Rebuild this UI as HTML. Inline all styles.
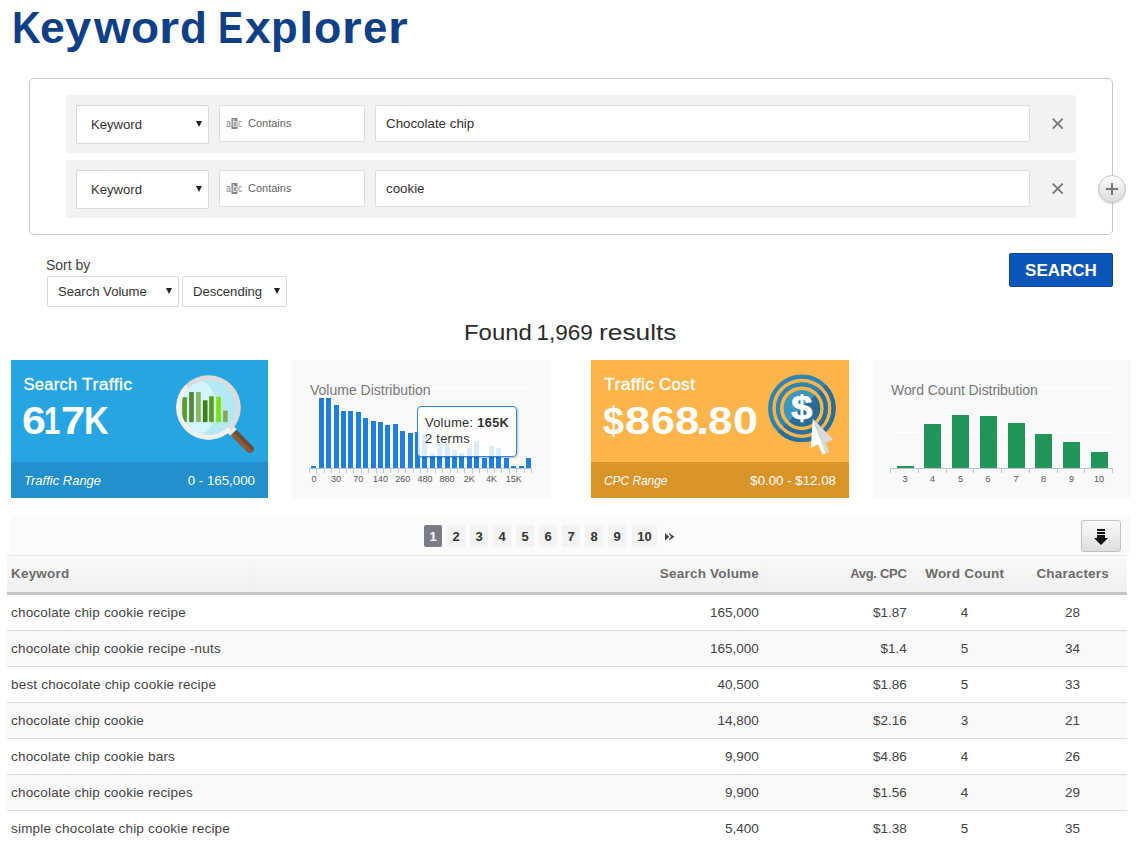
<!DOCTYPE html>
<html>
<head>
<meta charset="utf-8">
<title>Keyword Explorer</title>
<style>
*{box-sizing:border-box;margin:0;padding:0}
html,body{width:1145px;height:843px;overflow:hidden;background:#fff}
body{font-family:"Liberation Sans",sans-serif;color:#444;position:relative}
.a{position:absolute;white-space:nowrap}
#title{left:0;top:0;font-size:44.3px;line-height:44.3px;font-weight:bold;color:#0f3f87}
.g{transform-origin:0 0;display:block}
#fbox{left:29px;top:78px;width:1084px;height:157px;border:1px solid #c8c8c8;border-radius:5px;background:#fff}
.frow{left:66px;width:1010px;height:58px;background:#f2f2f2;border-radius:3px}
.sel{background:#fff;border:1px solid #d8d8d8;border-radius:2px;font-size:13.1px;color:#333}
.sel .tx{position:absolute;top:0;line-height:100%}
.arr{position:absolute;width:0;height:0;border-left:3.5px solid transparent;border-right:3.5px solid transparent;border-top:6px solid #222}
.cont{background:#fff;border:1px solid #ddd;border-radius:2px}
.inp{background:#fff;border:1px solid #ddd;border-radius:2px;font-size:13.33px;color:#333}
.x{font-size:14px;color:#555}
#plus{left:1098px;top:175px;width:28px;height:28px;border-radius:50%;border:1px solid #c4c4c4;background:linear-gradient(#fcfcfc,#dcdcdc);box-shadow:0 1px 1px rgba(0,0,0,.15)}
#sortby{left:46px;top:256px;font-size:14px;line-height:18px;color:#444}
#search{left:1009px;top:253px;width:104px;height:34px;background:#0d56b9;border:1px solid #0a469a;border-radius:2px;color:#fff;font-weight:bold;font-size:17px;line-height:34px;text-align:center}
.fw{top:319px;font-size:22.5px;line-height:28px;color:#2b2b2b;transform-origin:0 0}
#found{left:0;width:1142px;top:319px;text-align:center;font-size:22.5px;line-height:28px;color:#2b2b2b;letter-spacing:.78px}
.card{top:360px;height:138px;width:258px}
.card .ft{position:absolute;left:0;right:0;top:102px;bottom:0}
.ct{transform-origin:0 0;font-size:16.5px;line-height:20px;color:#fff;letter-spacing:.3px;-webkit-text-stroke:.3px #fff}
.cv{font-size:38.2px;line-height:38.2px;color:#fff;font-weight:bold}
.cf{font-size:13.3px;line-height:16px;color:#fff}
.cf.i{font-style:italic;font-size:13px}
.gt{font-size:14px;line-height:16px;color:#777}
.gl{font-size:9px;line-height:10px;color:#555;text-align:center;width:30px}
#pbar{left:11px;top:516px;width:1120px;height:39px;background:#fbfbfb}
.pg{top:525px;height:22px;width:18px;border-radius:2px;background:#f3f3f3;color:#333;font-weight:bold;font-size:13px;line-height:24px;text-align:center}
.pg.on{background:#7c7c86;color:#fff}
#thead{left:7px;top:555px;width:1120px;height:40px;background:linear-gradient(#f9f9f9,#f0f0f0);border-top:1px solid #e9e9e9;border-bottom:3px solid #c6c6c6}
.th{top:566px;font-size:13.5px;line-height:16px;font-weight:bold;color:#6b6b6b;letter-spacing:.2px}
.tr{left:7px;width:1120px;height:36px;border-bottom:1px solid #ddd}
.tr.alt{background:#f9f9f9}
.td{font-size:13.5px;line-height:16px;color:#444}
.td.k{letter-spacing:.19px}
.r{text-align:right}
.c{text-align:center}
</style>
</head>
<body>
<div class="a" id="title"><span class="a g" style="left:11.55px;top:6.10px;transform:scaleX(0.895)">K</span><span class="a g" style="left:39.95px;top:6.10px;transform:scaleX(1.010)">e</span><span class="a g" style="left:64.63px;top:6.10px;transform:scaleX(1.064)">y</span><span class="a g" style="left:93.94px;top:6.10px;transform:scaleX(1.058)">w</span><span class="a g" style="left:131.30px;top:6.10px;transform:scaleX(1.038)">o</span><span class="a g" style="left:159.00px;top:6.10px;transform:scaleX(1.165)">r</span><span class="a g" style="left:179.59px;top:6.10px;transform:scaleX(0.994)">d</span><span class="a g" style="left:218.08px;top:6.10px;transform:scaleX(0.849)">E</span><span class="a g" style="left:244.68px;top:6.10px;transform:scaleX(1.045)">x</span><span class="a g" style="left:271.42px;top:6.10px;transform:scaleX(0.986)">p</span><span class="a g" style="left:298.94px;top:6.10px;transform:scaleX(1.185)">l</span><span class="a g" style="left:314.25px;top:6.10px;transform:scaleX(1.009)">o</span><span class="a g" style="left:341.96px;top:6.10px;transform:scaleX(1.143)">r</span><span class="a g" style="left:362.89px;top:6.10px;transform:scaleX(0.986)">e</span><span class="a g" style="left:387.86px;top:6.10px;transform:scaleX(1.143)">r</span></div>

<div class="a" id="fbox"></div>
<div class="a frow" style="top:95px"></div>
<div class="a frow" style="top:160px"></div>


<div class="a sel" style="left:76px;top:105px;width:133px;height:39px"><span class="tx" style="left:14px;top:12px">Keyword</span><span class="arr" style="left:119px;top:15px"></span></div>
<div class="a cont" style="left:219px;top:105px;width:146px;height:37px">
<svg class="a" style="left:5.5px;top:12px" width="18" height="12" viewBox="0 0 18 12"><rect x="5.500" y="0" width="6" height="11" fill="#858585"/><text transform="translate(0.2 9) scale(.8 1)" font-family="Liberation Sans, sans-serif" font-size="10.500" fill="#7a7a7a">a</text><text transform="translate(6.5 9) scale(.8 1)" font-family="Liberation Sans, sans-serif" font-size="10.500" fill="#fff">b</text><text transform="translate(12.3 9) scale(.72 1)" font-family="Liberation Sans, sans-serif" font-size="10.500" fill="#7a7a7a">c</text></svg>
<span class="a" style="left:28px;top:10px;font-size:11px;line-height:14px;color:#666">Contains</span></div>
<div class="a inp" style="left:375px;top:105px;width:655px;height:37px"><span class="a" style="left:10px;top:10px;line-height:16px">Chocolate chip</span></div>
<svg class="a" style="left:1051.5px;top:117.8px" width="12" height="12" viewBox="0 0 12 12"><path d="M0.700 0.700L10.700 10.700M10.700 0.700L0.700 10.700" stroke="#777" stroke-width="1.9" fill="none"/></svg>

<div class="a sel" style="left:76px;top:170px;width:133px;height:39px"><span class="tx" style="left:14px;top:12px">Keyword</span><span class="arr" style="left:119px;top:15px"></span></div>
<div class="a cont" style="left:219px;top:170px;width:146px;height:37px">
<svg class="a" style="left:5.5px;top:12px" width="18" height="12" viewBox="0 0 18 12"><rect x="5.500" y="0" width="6" height="11" fill="#858585"/><text transform="translate(0.2 9) scale(.8 1)" font-family="Liberation Sans, sans-serif" font-size="10.500" fill="#7a7a7a">a</text><text transform="translate(6.5 9) scale(.8 1)" font-family="Liberation Sans, sans-serif" font-size="10.500" fill="#fff">b</text><text transform="translate(12.3 9) scale(.72 1)" font-family="Liberation Sans, sans-serif" font-size="10.500" fill="#7a7a7a">c</text></svg>
<span class="a" style="left:28px;top:10px;font-size:11px;line-height:14px;color:#666">Contains</span></div>
<div class="a inp" style="left:375px;top:170px;width:655px;height:37px"><span class="a" style="left:10px;top:10px;line-height:16px">cookie</span></div>
<svg class="a" style="left:1051.5px;top:182.8px" width="12" height="12" viewBox="0 0 12 12"><path d="M0.700 0.700L10.700 10.700M10.700 0.700L0.700 10.700" stroke="#777" stroke-width="1.9" fill="none"/></svg>

<div class="a" id="plus"><svg class="a" style="left:7px;top:7px" width="12" height="12" viewBox="0 0 12 12"><path d="M6 0V12M0 6H12" stroke="#777" stroke-width="2" fill="none"/></svg></div>
<div class="a sel" style="left:47px;top:276px;width:132px;height:31px"><span class="tx" style="left:10px;top:8px">Search Volume</span><span class="arr" style="left:118px;top:11px"></span></div>
<div class="a sel" style="left:182px;top:276px;width:105px;height:31px"><span class="tx" style="left:10px;top:8px">Descending</span><span class="arr" style="left:91px;top:11px"></span></div>
<div class="a" id="sortby">Sort by</div>
<div class="a" id="search">SEARCH</div>
<div class="a fw" style="left:463.7px;transform:scaleX(1.063)">Found</div><div class="a fw" style="left:536.4px">1,969</div><div class="a fw" style="left:599.2px;transform:scaleX(1.17)">results</div>


<div class="a card" style="left:11px;width:257px;background:#27a5e3"><div class="ft" style="background:#2190cc"></div>
<div class="a ct" style="left:12.4px;top:14px;transform:scaleX(1.0)">Search</div><div class="a ct" style="left:70.6px;top:14px;transform:scaleX(1.072)">Traffic</div>
<div class="a cv" style="left:0;top:0"><span class="a g" style="left:10.83px;top:41.66px;transform:scaleX(1.121)">6</span><span class="a g" style="left:32.56px;top:41.66px;transform:scaleX(0.765)">1</span><span class="a g" style="left:49.83px;top:41.66px;transform:scaleX(1.138)">7</span><span class="a g" style="left:73.02px;top:41.66px;transform:scaleX(0.892)">K</span></div>
<div class="a cf i" style="left:13px;top:113px">Traffic Range</div>
<div class="a cf r" style="right:13px;top:113px">0 - 165,000</div>
<svg class="a" style="left:160px;top:10px" width="90" height="90" viewBox="0 0 90 90">
<defs><clipPath id="lens"><circle cx="37.5" cy="37.5" r="27.6"/></clipPath></defs>
<path d="M65.29 59.77 L81.76 76.25 A3.9 3.9 0 0 1 76.25 81.76 L59.77 65.29Z" fill="#6e4a35"/>
<path d="M62.53 62.53 L81.76 81.76 A3.9 3.9 0 0 1 76.25 81.76 L59.77 65.29Z" fill="#8b5a3d"/>
<path d="M61.26 54.75 L65.78 59.28 L59.28 65.78 L54.75 61.26Z" fill="#e9e9ec"/>
<circle cx="37.5" cy="37.5" r="32.3" fill="#dcdcdc"/>
<path d="M14.66 14.66 A32.3 32.3 0 0 0 60.34 60.34Z" fill="#f1f1f1"/>
<circle cx="37.5" cy="37.5" r="27.6" fill="#b4e9f3"/>
<g clip-path="url(#lens)">
<circle cx="15.6" cy="37.7" r="31" fill="#d2f5fa"/>
<rect x="11.2" y="27.2" width="4.7" height="24.9" fill="#5e9a2c"/>
<rect x="18.1" y="22" width="4.7" height="30.100" fill="#5a873a"/>
<rect x="25.1" y="22" width="4.7" height="30.100" fill="#8db366"/>
<rect x="31.9" y="30.300" width="4.6" height="21.800" fill="#3f8018"/>
<rect x="38.100" y="26.200" width="4.7" height="25.900" fill="#58a01b"/>
<rect x="45.200" y="26.800" width="4.7" height="25.300" fill="#7ee010"/>
<rect x="52.100" y="40.600" width="4.6" height="11.500" fill="#86a84c"/>
</g>
</svg>
</div>

<div class="a card" style="left:292px;background:#f9f9f9">
<svg class="a" style="left:0;top:0" width="258" height="138" viewBox="0 0 258 138">
<path d="M17.6 27.5H241" stroke="#fff" stroke-width="1"/>
<g fill="#1e7fe0"><rect x="19" y="106" width="5" height="2"/><rect x="27" y="38" width="5" height="70"/><rect x="34" y="38" width="5" height="70"/><rect x="42" y="45" width="5" height="63"/><rect x="49" y="51" width="5" height="57"/><rect x="56" y="51" width="5" height="57"/><rect x="64" y="52" width="5" height="56"/><rect x="71" y="58" width="5" height="50"/><rect x="79" y="61" width="5" height="47"/><rect x="86" y="62" width="5" height="46"/><rect x="93" y="65" width="5" height="43"/><rect x="101" y="64" width="5" height="44"/><rect x="108" y="71" width="5" height="37"/><rect x="116" y="73" width="5" height="35"/><rect x="123" y="72" width="5" height="36"/><rect x="130" y="74" width="5" height="34"/><rect x="138" y="93" width="5" height="15"/><rect x="145" y="83" width="5" height="25"/><rect x="153" y="83" width="5" height="25"/><rect x="160" y="90" width="5" height="18"/><rect x="167" y="93" width="5" height="15"/><rect x="175" y="88" width="5" height="20"/><rect x="182" y="81" width="5" height="27"/><rect x="190" y="98" width="5" height="10"/><rect x="197" y="86" width="5" height="22"/><rect x="204" y="88" width="5" height="20"/><rect x="212" y="98" width="5" height="10"/><rect x="219" y="106" width="5" height="2"/><rect x="227" y="106" width="5" height="2"/><rect x="234" y="98" width="5" height="10"/></g>
<path d="M17 108.500H240M17.5 108.5V113M24.5 108.5V113M32.5 108.5V113M39.5 108.5V113M47.5 108.5V113M54.5 108.5V113M61.5 108.5V113M69.5 108.5V113M76.5 108.5V113M84.5 108.5V113M91.5 108.5V113M98.5 108.5V113M106.5 108.5V113M113.5 108.5V113M121.5 108.5V113M128.5 108.5V113M135.5 108.5V113M143.5 108.5V113M150.5 108.5V113M158.5 108.5V113M165.5 108.5V113M172.5 108.5V113M180.5 108.5V113M187.5 108.5V113M195.5 108.5V113M202.5 108.5V113M209.5 108.5V113M217.5 108.5V113M224.5 108.5V113M232.5 108.5V113M239.5 108.5V113" stroke="#b8c6d8" stroke-width="1" fill="none"/>
</svg>
<div class="a gt" style="left:18px;top:22px">Volume Distribution</div>
<div class="a gl" style="left:6.9px;top:114px">0</div><div class="a gl" style="left:29.1px;top:114px">30</div><div class="a gl" style="left:51.3px;top:114px">70</div><div class="a gl" style="left:73.5px;top:114px">140</div><div class="a gl" style="left:95.7px;top:114px">260</div><div class="a gl" style="left:117.9px;top:114px">480</div><div class="a gl" style="left:140.1px;top:114px">880</div><div class="a gl" style="left:162.3px;top:114px">2K</div><div class="a gl" style="left:184.5px;top:114px">4K</div><div class="a gl" style="left:206.7px;top:114px">15K</div>
<div class="a" style="left:125px;top:46px;width:100px;height:51px;background:rgba(255,255,255,.85);border:1px solid #2c86dd;border-radius:4px;box-shadow:1px 1px 2px rgba(0,0,0,.25)">
<div class="a" style="left:6.5px;top:9px;font-size:12px;line-height:14px;color:#333;letter-spacing:.3px;transform-origin:0 0;transform:scaleX(1.065)">Volume: <b>165K</b></div>
<div class="a" style="left:6.5px;top:25px;font-size:12px;line-height:14px;color:#333;letter-spacing:.3px;transform-origin:0 0;transform:scaleX(1.065)">2 terms</div>
</div>
</div>

<div class="a card" style="left:591px;background:#fdb44b"><div class="ft" style="background:#d9942a"></div>
<div class="a ct" style="left:12.9px;top:14px;transform:scaleX(1.072)">Traffic</div><div class="a ct" style="left:68.1px;top:14px;transform:scaleX(1.03)">Cost</div>
<div class="a cv" style="left:0;top:0"><span class="a g" style="left:12.10px;top:41.66px;transform:scaleX(0.985)">$</span><span class="a g" style="left:34.47px;top:41.66px;transform:scaleX(1.183)">8</span><span class="a g" style="left:59.62px;top:41.66px;transform:scaleX(1.126)">6</span><span class="a g" style="left:83.51px;top:41.66px;transform:scaleX(1.145)">8</span><span class="a g" style="left:105.48px;top:41.66px;transform:scaleX(1.243)">.</span><span class="a g" style="left:116.91px;top:41.66px;transform:scaleX(1.145)">8</span><span class="a g" style="left:141.81px;top:41.66px;transform:scaleX(1.183)">0</span></div>
<div class="a cf i" style="left:13px;top:113px;transform-origin:0 0;transform:scaleX(.915)">CPC Range</div>
<div class="a cf r" style="right:13px;top:113px">$0.00 - $12.08</div>
<svg class="a" style="left:172px;top:10px" width="80" height="90" viewBox="0 0 80 90">
<defs><clipPath id="tlr"><path d="M80 -3 L80 90 L-13 90 Z"/></clipPath></defs>
<g fill="none" stroke="#2e84b2" stroke-width="4.200"><circle cx="38.9" cy="38.3" r="31.700"/><circle cx="38.9" cy="38.3" r="24"/></g>
<circle cx="38.9" cy="38.3" r="18.300" fill="#3f96b8"/>
<g clip-path="url(#tlr)">
<g fill="none" stroke="#2a6f9b" stroke-width="4.200"><circle cx="38.9" cy="38.3" r="31.700"/><circle cx="38.9" cy="38.3" r="24"/></g>
<circle cx="38.9" cy="38.3" r="18.300" fill="#266c95"/>
</g>
<text transform="translate(38.7 48.600) scale(1.15 1)" text-anchor="middle" font-family="Liberation Sans, sans-serif" font-weight="bold" font-size="33" fill="#fff" stroke="#fff" stroke-width=".7">$</text>
<path d="M49.800 48.400 L47.800 78 L54.900 74.200 L59.600 84.600 L62.900 83.400 Z" fill="#fdfdfd"/>
<path d="M49.800 48.400 L70.300 69.700 L62.600 72.700 L66.100 82.200 L62.900 83.400 Z" fill="#dadada"/>
</svg>
</div>

<div class="a card" style="left:873px;background:#f9f9f9">
<svg class="a" style="left:0;top:0" width="258" height="138" viewBox="0 0 258 138">
<path d="M17.4 27.5H240.500M17.4 72.5H240.500" stroke="#fff" stroke-width="1"/>
<g fill="#21955a"><rect x="24" y="106" width="17" height="2"/><rect x="51" y="64" width="17" height="44"/><rect x="79" y="55" width="17" height="53"/><rect x="107" y="56" width="17" height="52"/><rect x="135" y="63" width="17" height="45"/><rect x="162" y="74" width="17" height="34"/><rect x="190" y="82" width="17" height="26"/><rect x="218" y="92" width="17" height="16"/></g>
<path d="M17 108.500H240M17.5 108.5V113M45.5 108.5V113M73.5 108.5V113M100.5 108.5V113M128.5 108.5V113M156.5 108.5V113M184.5 108.5V113M211.5 108.5V113M239.5 108.5V113" stroke="#b8c6d8" stroke-width="1" fill="none"/>
</svg>
<div class="a gt" style="left:18px;top:22px;letter-spacing:-.07px">Word Count Distribution</div>
<div class="a gl" style="left:16.9px;top:114px">3</div><div class="a gl" style="left:44.6px;top:114px">4</div><div class="a gl" style="left:72.4px;top:114px">5</div><div class="a gl" style="left:100.1px;top:114px">6</div><div class="a gl" style="left:127.9px;top:114px">7</div><div class="a gl" style="left:155.6px;top:114px">8</div><div class="a gl" style="left:183.4px;top:114px">9</div><div class="a gl" style="left:211.1px;top:114px">10</div>
</div>

<div class="a" id="pbar"></div>
<div class="a" id="thead"></div>
<div class="a pg on" style="left:424px">1</div><div class="a pg" style="left:447px">2</div><div class="a pg" style="left:470px">3</div><div class="a pg" style="left:493px">4</div><div class="a pg" style="left:516px">5</div><div class="a pg" style="left:539px">6</div><div class="a pg" style="left:562px">7</div><div class="a pg" style="left:585px">8</div><div class="a pg" style="left:608px">9</div><div class="a pg" style="left:632px;width:25px">10</div><svg class="a" style="left:665px;top:533px" width="10" height="8" viewBox="0 0 10 8"><path d="M0 0L4.300 3.750L0 7.500ZM4 0L9.500 3.750L4 7.500L4 6.300L6.300 3.750L4 1.200Z" fill="#444"/></svg><div class="a" style="left:1081px;top:520px;width:40px;height:32px;border:1px solid #c0c0c0;border-radius:3px;background:linear-gradient(#fafafa,#dedede)">
<svg class="a" style="left:12px;top:8px" width="14" height="16" viewBox="0 0 14 16"><path d="M3 0H11V2H3ZM3 3H11V5H3ZM3 6H11V9H14L7 16L0 9H3Z" fill="#111"/></svg></div>
<div class="a th" style="left:11px">Keyword</div>
<div class="a th r" style="right:386px">Search Volume</div>
<div class="a th r" style="right:238.5px;font-size:13px;letter-spacing:-.3px">Avg. CPC</div>
<div class="a th c" style="left:914.7px;width:100px">Word Count</div>
<div class="a th c" style="left:1022.7px;width:100px">Characters</div>
<div class="a tr" style="top:595px">
<div class="a td k" style="left:4px;top:10px">chocolate chip cookie recipe</div><div class="a td r" style="right:368.2px;top:10px">165,000</div><div class="a td r" style="right:220.2px;top:10px">$1.87</div><div class="a td c" style="left:907.5px;width:100px;top:10px">4</div><div class="a td c" style="left:1015.5px;width:100px;top:10px">28</div></div>
<div class="a tr alt" style="top:631px">
<div class="a td k" style="left:4px;top:10px">chocolate chip cookie recipe -nuts</div><div class="a td r" style="right:368.2px;top:10px">165,000</div><div class="a td r" style="right:220.2px;top:10px">$1.4</div><div class="a td c" style="left:907.5px;width:100px;top:10px">5</div><div class="a td c" style="left:1015.5px;width:100px;top:10px">34</div></div>
<div class="a tr" style="top:667px">
<div class="a td k" style="left:4px;top:10px">best chocolate chip cookie recipe</div><div class="a td r" style="right:368.2px;top:10px">40,500</div><div class="a td r" style="right:220.2px;top:10px">$1.86</div><div class="a td c" style="left:907.5px;width:100px;top:10px">5</div><div class="a td c" style="left:1015.5px;width:100px;top:10px">33</div></div>
<div class="a tr alt" style="top:703px">
<div class="a td k" style="left:4px;top:10px">chocolate chip cookie</div><div class="a td r" style="right:368.2px;top:10px">14,800</div><div class="a td r" style="right:220.2px;top:10px">$2.16</div><div class="a td c" style="left:907.5px;width:100px;top:10px">3</div><div class="a td c" style="left:1015.5px;width:100px;top:10px">21</div></div>
<div class="a tr" style="top:739px">
<div class="a td k" style="left:4px;top:10px">chocolate chip cookie bars</div><div class="a td r" style="right:368.2px;top:10px">9,900</div><div class="a td r" style="right:220.2px;top:10px">$4.86</div><div class="a td c" style="left:907.5px;width:100px;top:10px">4</div><div class="a td c" style="left:1015.5px;width:100px;top:10px">26</div></div>
<div class="a tr alt" style="top:775px">
<div class="a td k" style="left:4px;top:10px">chocolate chip cookie recipes</div><div class="a td r" style="right:368.2px;top:10px">9,900</div><div class="a td r" style="right:220.2px;top:10px">$1.56</div><div class="a td c" style="left:907.5px;width:100px;top:10px">4</div><div class="a td c" style="left:1015.5px;width:100px;top:10px">29</div></div>
<div class="a tr" style="top:811px">
<div class="a td k" style="left:4px;top:10px">simple chocolate chip cookie recipe</div><div class="a td r" style="right:368.2px;top:10px">5,400</div><div class="a td r" style="right:220.2px;top:10px">$1.38</div><div class="a td c" style="left:907.5px;width:100px;top:10px">5</div><div class="a td c" style="left:1015.5px;width:100px;top:10px">35</div></div>

</body>
</html>
